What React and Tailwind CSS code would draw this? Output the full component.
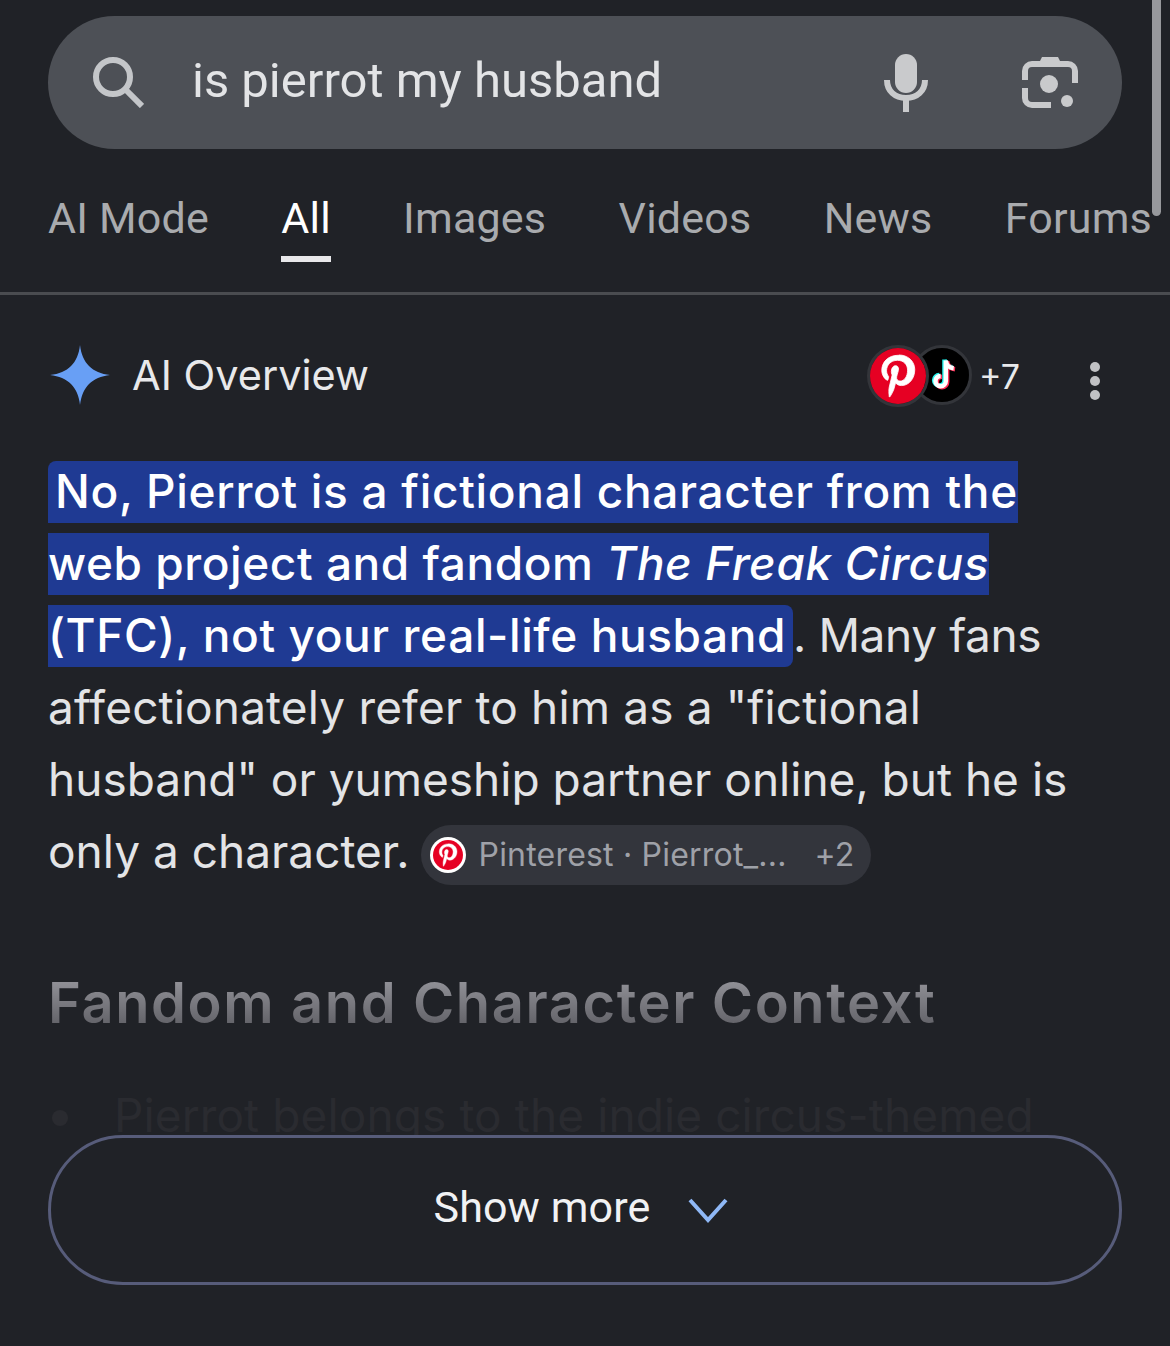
const PinterestMark = ({ className }) => (
  <svg viewBox="0 0 24 24" className={className}>
    <circle cx="12" cy="12" r="12" fill="#e60023" />
    <path
      transform="translate(12 12) scale(1.14) translate(-12 -12.4)"
      d="M12.2 4.600c-4.100 0-6.300 2.700-6.300 5.700 0 1.400.8 3.100 2 3.700.2.100.3 0 .3-.1l.3-1.100c0-.1 0-.2-.1-.3-.4-.5-.7-1.300-.7-2.100 0-2 1.500-3.900 4.100-3.900 2.200 0 3.800 1.500 3.800 3.700 0 2.400-1.200 4.100-2.800 4.100-.9 0-1.500-.7-1.300-1.600.2-1 .7-2.200.7-2.900 0-.7-.4-1.300-1.100-1.300-.9 0-1.600.9-1.600 2.200 0 .8.3 1.300.3 1.300l-1.100 4.600c-.3 1.300 0 3.400 0 3.600 0 .1.100.1.200.1.100-.1 1.200-1.800 1.600-3.100l.6-2.300c.3.600 1.200 1.100 2.200 1.100 2.900 0 5-2.700 5-6 0-3.200-2.600-5.500-6-5.500z"
      fill="#fff"
      stroke="#fff"
      strokeWidth="0.3"
    />
  </svg>
)

const TikTokMark = ({ className }) => (
  <svg viewBox="0 0 24 24" className={className}>
    <circle cx="12" cy="12" r="12" fill="#000" />
    <g transform="translate(0.8 0)">
      <path d="M12.900 5.500v9.200a2.300 2.300 0 1 1-2.300-2.300M12.900 5.500c.2 2 1.500 3.300 3.500 3.500" fill="none" stroke="#25f4ee" strokeWidth="2" transform="translate(-.6 -.4)" />
      <path d="M12.900 5.500v9.200a2.300 2.300 0 1 1-2.300-2.300M12.900 5.500c.2 2 1.500 3.300 3.500 3.500" fill="none" stroke="#fe2c55" strokeWidth="2" transform="translate(.6 .4)" />
      <path d="M12.900 5.500v9.200a2.300 2.300 0 1 1-2.300-2.300M12.900 5.500c.2 2 1.500 3.300 3.500 3.500" fill="none" stroke="#fff" strokeWidth="2" />
    </g>
  </svg>
)

const tabs = ["AI Mode", "All", "Images", "Videos", "News", "Forums"]

export default function App() {
  return (
    <div className="relative w-[1170px] h-[1346px] overflow-hidden bg-[#202227] font-['Roboto',sans-serif]">
      {/* scrollbar */}
      <div className="absolute right-[9px] top-0 w-[9px] h-[216px] rounded-b-full bg-[#97989c]" />

      {/* Search */}
      <div className="pt-4 px-12">
        <div className="flex items-center h-[133px] rounded-full bg-[#4d5056] pl-11 pr-11">
          <svg viewBox="0 0 52 52" className="w-[52px] h-[52px] shrink-0 -mt-[2px]" fill="none" stroke="#c4c6c9" strokeWidth="6">
            <circle cx="21" cy="21" r="17" />
            <path d="M33 33 L50 50" />
          </svg>
          <span className="ml-[48px] -mt-[4px] text-[49px] leading-none text-[#e3e4e6]">is pierrot my husband</span>
          <svg viewBox="0 0 44 58" className="ml-auto w-[44px] h-[58px] mr-[94px]">
            <rect x="11" y="0" width="22" height="39" rx="11" fill="#c9cacc" />
            <path d="M3 26c0 11 8 18 19 18s19-7 19-18" fill="none" stroke="#c9cacc" strokeWidth="6" />
            <rect x="19" y="44" width="6" height="14" fill="#c9cacc" />
          </svg>
          <svg viewBox="0 0 56 56" className="w-[56px] h-[56px]" fill="none">
            <path d="M3 25V16a7 7 0 0 1 7-7h36a7 7 0 0 1 7 7v12" stroke="#c9cacc" strokeWidth="6" />
            <path d="M3 33v10a7 7 0 0 0 7 7h19" stroke="#c9cacc" strokeWidth="6" />
            <path d="M17 8l3-6h16l3 6z" fill="#c9cacc" />
            <circle cx="27" cy="29" r="9" fill="#c9cacc" />
            <circle cx="45" cy="46" r="6" fill="#c9cacc" />
          </svg>
        </div>
      </div>

      {/* Tabs */}
      <div className="h-[146px] border-b-[3px] border-[#4a4c50] pl-12 flex items-start gap-[72.3px] pt-[43px] whitespace-nowrap">
        {tabs.map((t) => (
          <div key={t} className={"relative text-[43px] leading-[52px] tracking-[0.2px] " + (t === "All" ? "text-white" : "text-[#a9abae]")}>
            {t}
            {t === "All" && <div className="absolute left-0 right-0 top-[64px] h-[6px] bg-[#e8e8ea]" />}
          </div>
        ))}
      </div>

      {/* AI Overview head */}
      <div className="relative h-[160px] font-['Inter',sans-serif]">
        <div className="flex items-center pl-[50px] pt-[50px]">
          <svg viewBox="0 0 60 60" className="w-[60px] h-[60px]">
            <path d="M30 0C32 18 42 28 60 30 42 32 32 42 30 60 28 42 18 32 0 30 18 28 28 18 30 0z" fill="#689ff5" />
          </svg>
          <span className="ml-[22px] mt-[2px] text-[41.5px] leading-none text-[#e8e9eb]">AI Overview</span>
        </div>
        <div className="absolute left-[912px] top-[50px] w-[60px] h-[60px] rounded-full border-[3px] border-[#33353a]">
          <TikTokMark className="w-full h-full" />
        </div>
        <div className="absolute left-[867px] top-[50px] w-[62px] h-[62px] rounded-full border-[3px] border-[#33353a]">
          <PinterestMark className="w-full h-full" />
        </div>
        <span className="absolute left-[979px] top-[60px] text-[34px] leading-[44px] text-[#e8e9eb]">+7</span>
        <div className="absolute left-[1090px] top-[67px] flex flex-col gap-[4px]">
          <div className="w-[10px] h-[10px] rounded-full bg-[#c0c1c4]" />
          <div className="w-[10px] h-[10px] rounded-full bg-[#c0c1c4]" />
          <div className="w-[10px] h-[10px] rounded-full bg-[#c0c1c4]" />
        </div>
      </div>

      {/* Answer */}
      <div className="px-12 text-[46px] leading-[72px] text-[#e3e4e6] whitespace-nowrap font-['Inter',sans-serif]">
        <span className="bg-[#1f3a93] text-white font-medium tracking-[0.7px] pt-[2px] pb-[4px] pl-[7px] rounded-tl-lg">No, Pierrot is a fictional character from the</span>
        <br />
        <span className="bg-[#1f3a93] text-white font-medium tracking-[0.55px] pt-[2px] pb-[4px]">web project and fandom <i>The Freak Circus</i></span>
        <br />
        <span className="bg-[#1f3a93] text-white font-medium tracking-[0.6px] pt-[2px] pb-[4px] pr-[7px] rounded-br-lg rounded-tr-lg">(TFC), not your real-life husband</span>
        <span className="tracking-[-0.4px]">. Many fans</span>
        <br />
        <span className="tracking-[0.15px]">affectionately refer to him as a "fictional</span>
        <br />
        husband" or yumeship partner online, but he is
        <br />
        only a character.
        <span className="inline-flex items-center align-top mt-[10px] ml-[11px] h-[60px] w-[450px] rounded-full bg-[#33353c] pl-[9px] pr-[16px] text-[32px] leading-none tracking-[0.2px] text-[#9fa1a8]">
          <span className="w-[36px] h-[36px] rounded-full bg-white flex items-center justify-center shrink-0">
            <PinterestMark className="w-[30px] h-[30px]" />
          </span>
          <span className="ml-[13px]">Pinterest · Pierrot_...</span>
          <span className="ml-auto">+2</span>
        </span>
      </div>

      {/* Faded content */}
      <div className="mt-[80px] px-12 font-['Inter',sans-serif]">
        <div className="w-fit text-[56px] leading-[72px] font-semibold tracking-[1.6px] bg-gradient-to-b from-[#a0a0a6] to-[#55555b] bg-clip-text text-transparent">Fandom and Character Context</div>
        <div className="flex items-center mt-[40px] text-[46px] leading-[72px] text-[#2a2b30] whitespace-nowrap">
          <div className="w-[16px] h-[16px] rounded-full bg-[#2a2b30] ml-[4px] mt-[6px]" />
          <span className="ml-[46px] tracking-[0.1px]">Pierrot belongs to the indie circus-themed</span>
        </div>
      </div>

      {/* Show more */}
      <div className="absolute left-12 top-[1135px] w-[1074px] h-[150px] rounded-full border-[3px] border-[#575c7a] bg-[#202227] flex items-center justify-center">
        <span className="-ml-[8px] -mt-[6px] text-[43px] leading-none tracking-[0.1px] text-[#f1f2f4]">Show more</span>
        <svg viewBox="0 0 40 26" className="ml-[38px] w-[40px] h-[26px]" fill="none" stroke="#8fb8f6" strokeWidth="4">
          <path d="M2 3 L20 23 L38 3" />
        </svg>
      </div>
    </div>
  )
}
